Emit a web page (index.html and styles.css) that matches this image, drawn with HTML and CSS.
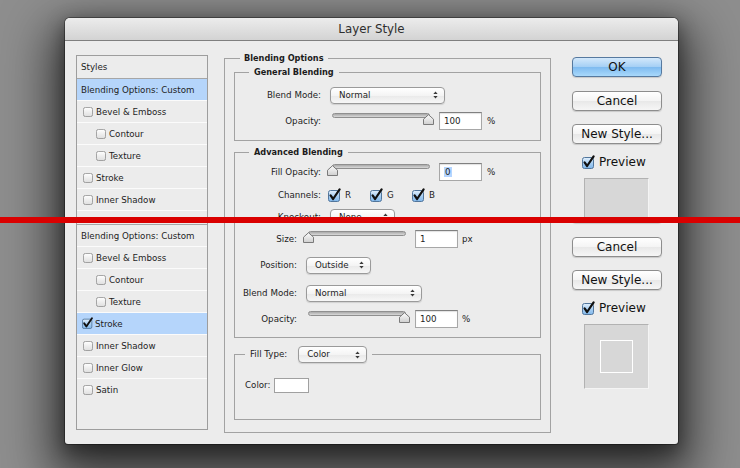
FILE: index.html
```html
<!DOCTYPE html>
<html>
<head>
<meta charset="utf-8">
<title>Layer Style</title>
<link rel="stylesheet" href="styles.css">
</head>
<body>
<svg class="defs" width="0" height="0" aria-hidden="true">
  <defs>
    <linearGradient id="gBox" x1="0" y1="0" x2="0" y2="1">
      <stop offset="0" stop-color="#ffffff"/>
      <stop offset="1" stop-color="#dedede"/>
    </linearGradient>
    <linearGradient id="gBlue" x1="0" y1="0" x2="0" y2="1">
      <stop offset="0" stop-color="#e3f0fc"/>
      <stop offset="0.5" stop-color="#a9d0f4"/>
      <stop offset="1" stop-color="#7fb6ea"/>
    </linearGradient>
    <linearGradient id="gThumb" x1="0" y1="0" x2="0" y2="1">
      <stop offset="0" stop-color="#fdfdfd"/>
      <stop offset="1" stop-color="#cfcfcf"/>
    </linearGradient>
  </defs>
  <symbol id="cb-off" viewBox="0 0 12 12">
    <rect x="0.5" y="0.5" width="11" height="11" rx="2.5" fill="url(#gBox)" stroke="#8d8d8d"/>
  </symbol>
  <symbol id="cb-on" viewBox="0 0 14 14">
    <rect x="0.5" y="2.5" width="11" height="11" rx="2" fill="url(#gBlue)" stroke="#52769c"/>
    <path d="M2.6 7.4 L5.1 11 L11.6 1.4" fill="none" stroke="#111" stroke-width="2.2" stroke-linecap="round" stroke-linejoin="round"/>
  </symbol>
  <symbol id="thumb" viewBox="0 0 11 11">
    <path d="M0.5 10.5 V5.2 L5.5 0.7 L10.5 5.2 V10.5 Z" fill="url(#gThumb)" stroke="#7a7a7a" stroke-linejoin="round"/>
  </symbol>
  <symbol id="ud" viewBox="0 0 6 9">
    <path d="M3 0.3 L5.6 3.4 H0.4 Z M3 8.7 L5.6 5.6 H0.4 Z" fill="#3a3a3a"/>
  </symbol>
</svg>

<div class="dialog">
  <div class="titlebar">Layer Style</div>

  <!-- upper capture: Blending Options -->
  <div class="slice slice-a">
    <div class="pane">
      <div class="styles">
        <div class="srow head">Styles</div>
        <div class="srow sel">Blending Options: Custom</div>
        <div class="srow"><svg class="cb"><use href="#cb-off"/></svg><span>Bevel &amp; Emboss</span></div>
        <div class="srow sub"><svg class="cb"><use href="#cb-off"/></svg><span>Contour</span></div>
        <div class="srow sub"><svg class="cb"><use href="#cb-off"/></svg><span>Texture</span></div>
        <div class="srow"><svg class="cb"><use href="#cb-off"/></svg><span>Stroke</span></div>
        <div class="srow"><svg class="cb"><use href="#cb-off"/></svg><span>Inner Shadow</span></div>
        <div class="srow"><svg class="cb"><use href="#cb-off"/></svg><span>Inner Glow</span></div>
        <div class="srow last"><svg class="cb"><use href="#cb-off"/></svg><span>Satin</span></div>
      </div>

      <div class="middle">
        <fieldset class="outer">
          <legend>Blending Options</legend>
          <fieldset class="group general">
            <legend>General Blending</legend>
            <div class="frow">
              <span class="lbl">Blend Mode:</span>
              <div class="select w115"><span>Normal</span><svg class="ud"><use href="#ud"/></svg></div>
            </div>
            <div class="frow mt8">
              <span class="lbl">Opacity:</span>
              <div class="slider"><div class="track"></div><svg class="thumb end"><use href="#thumb"/></svg></div>
              <div class="num">100</div><span class="unit">%</span>
            </div>
          </fieldset>
          <fieldset class="group adv">
            <legend>Advanced Blending</legend>
            <div class="frow">
              <span class="lbl">Fill Opacity:</span>
              <div class="slider"><div class="track"></div><svg class="thumb start"><use href="#thumb"/></svg></div>
              <div class="num"><span class="hl">0</span></div><span class="unit">%</span>
            </div>
            <div class="frow mt5">
              <span class="lbl">Channels:</span>
              <div class="chs">
                <span class="ch"><svg class="cbon"><use href="#cb-on"/></svg>R</span>
                <span class="ch"><svg class="cbon"><use href="#cb-on"/></svg>G</span>
                <span class="ch"><svg class="cbon"><use href="#cb-on"/></svg>B</span>
              </div>
            </div>
            <div class="frow mt4">
              <span class="lbl">Knockout:</span>
              <div class="select w65"><span>None</span><svg class="ud"><use href="#ud"/></svg></div>
            </div>
          </fieldset>
        </fieldset>
      </div>

      <div class="side">
        <div class="btn ok">OK</div>
        <div class="btn">Cancel</div>
        <div class="btn nb">New Style...</div>
        <div class="prev"><svg class="cbon"><use href="#cb-on"/></svg><span>Preview</span></div>
        <div class="pbox"></div>
      </div>
    </div>
  </div>

  <!-- lower capture: Stroke -->
  <div class="slice slice-b">
    <div class="pane pane-b">
      <div class="styles">
        <div class="srow head">Styles</div>
        <div class="srow">Blending Options: Custom</div>
        <div class="srow"><svg class="cb"><use href="#cb-off"/></svg><span>Bevel &amp; Emboss</span></div>
        <div class="srow sub"><svg class="cb"><use href="#cb-off"/></svg><span>Contour</span></div>
        <div class="srow sub"><svg class="cb"><use href="#cb-off"/></svg><span>Texture</span></div>
        <div class="srow sel chk"><svg class="cbl"><use href="#cb-on"/></svg><span>Stroke</span></div>
        <div class="srow"><svg class="cb"><use href="#cb-off"/></svg><span>Inner Shadow</span></div>
        <div class="srow"><svg class="cb"><use href="#cb-off"/></svg><span>Inner Glow</span></div>
        <div class="srow last"><svg class="cb"><use href="#cb-off"/></svg><span>Satin</span></div>
      </div>

      <div class="middle">
        <fieldset class="outer">
          <legend>Stroke</legend>
          <fieldset class="group structure narrow">
            <legend>Structure</legend>
            <div class="frow">
              <span class="lbl">Size:</span>
              <div class="slider"><div class="track"></div><svg class="thumb start"><use href="#thumb"/></svg></div>
              <div class="num">1</div><span class="unit u4">px</span>
            </div>
            <div class="frow mt8">
              <span class="lbl">Position:</span>
              <div class="select w65"><span>Outside</span><svg class="ud"><use href="#ud"/></svg></div>
            </div>
            <div class="frow mt10">
              <span class="lbl">Blend Mode:</span>
              <div class="select w116"><span>Normal</span><svg class="ud"><use href="#ud"/></svg></div>
            </div>
            <div class="frow mt8">
              <span class="lbl">Opacity:</span>
              <div class="slider"><div class="track"></div><svg class="thumb end"><use href="#thumb"/></svg></div>
              <div class="num">100</div><span class="unit u4">%</span>
            </div>
          </fieldset>
          <fieldset class="group fill">
            <legend><span class="lg"><span>Fill Type:</span><span class="select w69"><span>Color</span><svg class="ud"><use href="#ud"/></svg></span></span></legend>
            <div class="frow color">
              <span>Color:</span><span class="swatch"></span>
            </div>
          </fieldset>
        </fieldset>
      </div>

      <div class="side">
        <div class="btn ok">OK</div>
        <div class="btn">Cancel</div>
        <div class="btn nb">New Style...</div>
        <div class="prev"><svg class="cbon"><use href="#cb-on"/></svg><span>Preview</span></div>
        <div class="pbox"><div class="inner"></div></div>
      </div>
    </div>
  </div>
</div>

<div class="cut"></div>
</body>
</html>
```

FILE: styles.css
```css
* { box-sizing: border-box; }

html, body { margin: 0; }

body {
  position: relative;
  width: 740px;
  height: 468px;
  overflow: hidden;
  padding: 18px 0 0 65px;
  background: #8e8e8e;
  font-family: "DejaVu Sans", "Noto Sans", sans-serif;
  font-size: 8.7px;
  color: #1d1d1d;
}

.defs { display: block; width: 0; height: 0; overflow: hidden; }

.dialog {
  width: 613px;
  height: 426px;
  background: #ececec;
  border-radius: 5px 5px 3px 3px;
  overflow: hidden;
  box-shadow:
    0 0 0 1px rgba(0, 0, 0, 0.35),
    0 22px 50px 14px rgba(0, 0, 0, 0.62),
    0 6px 18px 2px rgba(0, 0, 0, 0.35);
}

.titlebar {
  height: 23px;
  background: linear-gradient(#ececec, #d3d3d3);
  border-bottom: 1px solid #7f7f7f;
  text-align: center;
  font-size: 11.8px;
  line-height: 22px;
  color: #2e2e2e;
}

.slice { overflow: hidden; }
.slice-a { height: 176px; }
.slice-b { height: 227px; }

.pane {
  display: flex;
  align-items: flex-start;
  height: 257px;
  padding: 0 16px 0 11px;
}
.pane-b { margin-top: -30px; }

/* ---------- styles list ---------- */
.styles {
  flex: none;
  width: 132px;
  height: 229px;
  margin-top: 14px;
  border: 1px solid #9d9d9d;
}
.srow {
  display: flex;
  align-items: center;
  gap: 3px;
  height: 22px;
  padding-left: 4px;
  border-bottom: 1px solid #fbfbfb;
  white-space: nowrap;
}
.srow .cb { margin-left: 2px; }
.srow.head { height: 23px; border-bottom-color: #a6a6a6; }
.srow.sel { background: #b5d5fb; }
.srow.sub { padding-left: 17px; }
.srow.last { border-bottom: none; }
.srow.chk { padding-left: 5px; gap: 1px; }
.cb { flex: none; width: 10px; height: 10px; }
.cbl { flex: none; width: 12px; height: 12px; margin-top: -2px; }

/* ---------- middle panel ---------- */
.middle {
  flex: none;
  width: 327px;
  margin: 11px 0 0 16px;
}
fieldset {
  margin: 0;
  min-width: 0;
  border: 1px solid #a2a2a2;
}
legend {
  font-weight: bold;
  font-size: 8.2px;
  line-height: 13px;
  color: #1b1b1b;
}
.outer { padding: 1px 9px 12px 9px; }
.outer > legend { margin-left: 6px; padding: 0 4px; }

.group { padding: 7px 0 10px 0; }
.group > legend { margin-left: 14px; padding: 0 5px; }
.adv { margin-top: 5px; padding-top: 4px; }
.structure { padding-top: 5px; padding-bottom: 9px; }

.fill { margin-top: 8px; padding: 13px 0 25px 0; }
.fill > legend {
  margin-left: 10px;
  padding: 0 5px;
  font-weight: normal;
  font-size: 8.7px;
  line-height: 17px;
}
.lg { display: inline-flex; align-items: center; height: 17px; vertical-align: top; }
.lg .select { margin-left: 11px; }

.frow {
  display: flex;
  align-items: center;
  height: 18px;
  white-space: nowrap;
}
.mt4 { margin-top: 4px; }
.mt5 { margin-top: 5px; }
.mt8 { margin-top: 8px; }
.mt10 { margin-top: 10px; }

.lbl {
  flex: none;
  width: 86px;
  margin-right: 9px;
  text-align: right;
}
.narrow .lbl { width: 62px; }

.select {
  flex: none;
  display: flex;
  align-items: center;
  height: 17px;
  padding-left: 8px;
  border: 1px solid #9a9a9a;
  border-radius: 4px;
  background: linear-gradient(#ffffff, #f4f4f4 50%, #e9e9e9 51%, #f7f7f7);
  box-shadow: 0 1px 1px rgba(0, 0, 0, 0.12);
  font-weight: normal;
}
.select .ud { flex: none; width: 5px; height: 8px; margin-left: auto; margin-right: 6px; }
.w65 { width: 65px; }
.w69 { width: 69px; }
.w115 { width: 115px; }
.w116 { width: 116px; }

.slider {
  flex: none;
  position: relative;
  width: 107px;
  height: 18px;
  margin-left: -3px;
}
.track {
  height: 5px;
  margin: 1px 4px 0 5px;
  border: 1px solid #8f8f8f;
  border-radius: 3px;
  background: linear-gradient(#a9a9a9, #d9d9d9);
}
.thumb {
  position: absolute;
  top: 2px;
  width: 11px;
  height: 11px;
}
.thumb.start { left: 0; }
.thumb.end { right: 0; }

.num {
  flex: none;
  width: 43px;
  height: 18px;
  margin-left: 5px;
  padding-left: 4px;
  border: 1px solid #a7a7a7;
  border-top-color: #808080;
  background: #fff;
  box-shadow: inset 0 1px 1px rgba(0, 0, 0, 0.12);
  line-height: 16px;
}
.hl { background: #b5d5ff; padding: 0 1px; }
.unit { margin-left: 5px; }
.unit.u4 { margin-left: 4px; }

.chs { display: flex; margin-left: -2px; }
.ch { display: flex; align-items: center; gap: 3px; width: 42px; }
.cbon { flex: none; width: 14px; height: 14px; }

.color { padding-left: 10px; }
.swatch {
  width: 35px;
  height: 15px;
  margin-left: 4px;
  background: #fff;
  border: 1px solid #a0a0a0;
}

/* ---------- right column ---------- */
.side {
  flex: none;
  display: flex;
  flex-direction: column;
  width: 90px;
  margin: 16px 0 0 21px;
}
.btn {
  height: 20px;
  border: 1px solid #8d8d8d;
  border-radius: 4px;
  background: linear-gradient(#ffffff, #f4f4f4 50%, #e8e8e8 51%, #f6f6f6);
  box-shadow: 0 1px 1px rgba(0, 0, 0, 0.15);
  text-align: center;
  font-size: 12px;
  line-height: 18px;
  color: #111;
}
.btn + .btn { margin-top: 14px; }
.btn.nb { margin-top: 13px; }
.btn.ok {
  border-color: #56799f;
  background: linear-gradient(#d3e8fb, #a6d0f5 48%, #7fbbf0 52%, #a9d9fb);
}

.prev {
  display: flex;
  align-items: center;
  gap: 3px;
  height: 16px;
  margin-top: 10px;
  padding-left: 10px;
  font-size: 12px;
  color: #111;
}
.pbox {
  display: flex;
  align-items: center;
  justify-content: center;
  width: 65px;
  height: 65px;
  margin: 8px 0 0 12px;
  background: #d7d7d7;
  border: 1px solid;
  border-color: #b2b2b2 #f4f4f4 #f4f4f4 #b2b2b2;
}
.pbox .inner {
  width: 33px;
  height: 33px;
  border: 1px solid #ffffff;
}

/* red cut line between the two captures */
.cut {
  position: absolute;
  left: 0;
  top: 217px;
  width: 740px;
  height: 6px;
  background: #da0000;
}
```
